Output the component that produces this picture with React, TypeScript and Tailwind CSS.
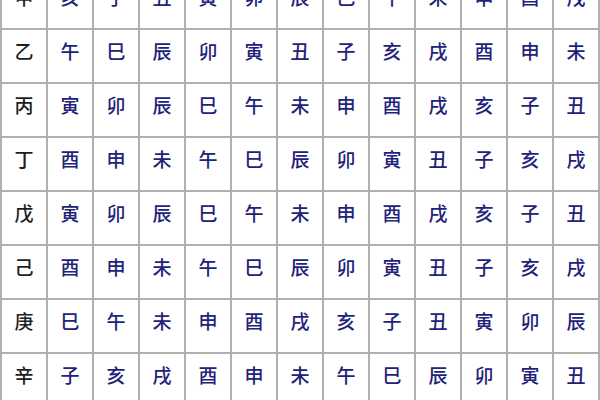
import { FC } from "react";

const rows: string[][] = [
    ["甲", "亥", "子", "丑", "寅", "卯", "辰", "巳", "午", "未", "申", "酉", "戌"],
    ["乙", "午", "巳", "辰", "卯", "寅", "丑", "子", "亥", "戌", "酉", "申", "未"],
    ["丙", "寅", "卯", "辰", "巳", "午", "未", "申", "酉", "戌", "亥", "子", "丑"],
    ["丁", "酉", "申", "未", "午", "巳", "辰", "卯", "寅", "丑", "子", "亥", "戌"],
    ["戊", "寅", "卯", "辰", "巳", "午", "未", "申", "酉", "戌", "亥", "子", "丑"],
    ["己", "酉", "申", "未", "午", "巳", "辰", "卯", "寅", "丑", "子", "亥", "戌"],
    ["庚", "巳", "午", "未", "申", "酉", "戌", "亥", "子", "丑", "寅", "卯", "辰"],
    ["辛", "子", "亥", "戌", "酉", "申", "未", "午", "巳", "辰", "卯", "寅", "丑"],
];

const App: FC = () => {
    return (
        <div
            className="w-[600px] h-[400px] overflow-hidden bg-white"
            style={{ fontFamily: '"Noto Sans CJK SC", "Noto Sans", sans-serif' }}
        >
            {/* table, top row is cut off by the frame */}
            <div className="-mt-[26px] grid grid-cols-[repeat(13,44px)] auto-rows-[52px] gap-[2px] border-2 border-[#b0b0b0] bg-[#b0b0b0] w-[600px]">
                {rows.map((row, r) =>
                    row.map((cell, c) => (
                        <div
                            key={`${r}-${c}`}
                            className={
                                c === 0
                                    ? "flex items-center justify-center bg-white pb-[10px] text-[19px] font-medium text-[#1e1e1e]"
                                    : "flex items-center justify-center bg-white pb-[10px] text-[19px] font-medium text-[#22227a]"
                            }
                        >
                            {cell}
                        </div>
                    ))
                )}
            </div>
        </div>
    );
};

export default App;
